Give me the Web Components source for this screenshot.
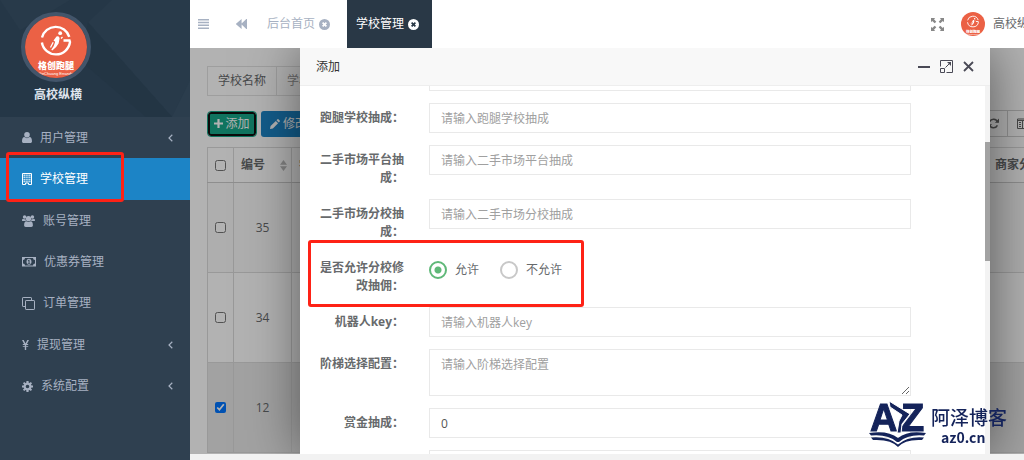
<!DOCTYPE html>
<html lang="zh-CN">
<head>
<meta charset="utf-8">
<meta name="viewport" content="width=device-width, initial-scale=1">
<title>学校管理</title>
<style>
  html, body { margin: 0; height: 100%; }
  body {
    font: 12px/18px "Open Sans", "Noto Sans CJK SC", sans-serif;
    color: #676a6c; background: #f2f2f2; overflow: hidden;
  }
</style>
</head>
<body>
<app-shell>
  <side-nav slot="nav" name="高校纵横">
    <nav-item icon="user" label="用户管理" more></nav-item>
    <nav-item icon="building" label="学校管理" active></nav-item>
    <nav-item icon="group" label="账号管理"></nav-item>
    <nav-item icon="money" label="优惠券管理"></nav-item>
    <nav-item icon="copy" label="订单管理"></nav-item>
    <nav-item icon="yen" label="提现管理" more></nav-item>
    <nav-item icon="gear" label="系统配置" more></nav-item>
  </side-nav>
  <top-bar slot="top" user="高校纵横">
    <tab-item label="后台首页"></tab-item>
    <tab-item label="学校管理" active></tab-item>
  </top-bar>
  <school-list slot="page"></school-list>
  <modal-dialog slot="dialog" heading="添加">
    <form-row></form-row>
    <form-row label="跑腿学校抽成：" hint="请输入跑腿学校抽成"></form-row>
    <form-row label="二手市场平台抽成：" hint="请输入二手市场平台抽成"></form-row>
    <form-row label="二手市场分校抽成：" hint="请输入二手市场分校抽成"></form-row>
    <radio-row label="是否允许分校修改抽佣：" options="允许,不允许"></radio-row>
    <form-row label="机器人key：" hint="请输入机器人key"></form-row>
    <form-row label="阶梯选择配置：" hint="请输入阶梯选择配置" multiline></form-row>
    <form-row label="赏金抽成：" value="0"></form-row>
    <form-row></form-row>
  </modal-dialog>
  <site-mark slot="mark"></site-mark>
</app-shell>

<script>
const define = (name, render, ready) => customElements.define(name, class extends HTMLElement {
  connectedCallback() {
    if (this.shadowRoot) return;
    this.attachShadow({ mode: 'open' }).innerHTML = render(this);
    if (ready) ready(this);
  }
});
const attr = (el, n) => el.getAttribute(n) || '';

/* name: [width, height, markup] */
const ICONS = {
  user: [10, 11, '<circle cx="5" cy="2.8" r="2.8"/><path d="M0 9.2C0 6.6 1 5.2 2.4 5.1 3.9 6.5 6.1 6.5 7.6 5.1 9 5.2 10 6.6 10 9.2 10 10.300 9.300 11 8.300 11H1.700C.700 11 0 10.300 0 9.200Z"/>'],
  building: [10, 12, '<path d="M.500.500H9.500V11.500H6.500V10H3.500V11.500H.500Z" fill="none" stroke="currentColor"/><path opacity=".75" d="M1.500 1.500h1.500v1.500H1.500zM3.500 1.500h1.300v1.500H3.500zM5.300 1.500h1.300v1.500H5.300zM7.100 1.500h1.400v1.500H7.100zM1.500 3.600h1.500v1.500H1.500zM3.500 3.600h1.300v1.500H3.500zM5.300 3.600h1.300v1.500H5.300zM7.100 3.600h1.400v1.500H7.100zM1.500 5.700h1.500v1.500H1.500zM3.500 5.700h1.300v1.500H3.500zM5.300 5.700h1.300v1.500H5.300zM7.100 5.700h1.400v1.500H7.100zM1.500 7.800h1.500v1.500H1.500zM3.500 7.800h1.300v1.500H3.500zM5.300 7.800h1.300v1.500H5.300zM7.100 7.800h1.400v1.500H7.100z"/>'],
  group: [13, 12, '<circle cx="2.600" cy="2" r="1.800"/><circle cx="10.400" cy="2" r="1.800"/><circle cx="6.500" cy="3.700" r="2.600"/><path d="M0 5.500C0 4.300.500 3.600 1.200 3.700 2 4.300 2.800 4.300 3.400 4.100 3.400 5 3.700 5.500 4 6H.900C.400 6 0 5.900 0 5.500ZM13 5.500C13 4.300 12.500 3.600 11.800 3.700 11 4.300 10.200 4.300 9.600 4.100 9.600 5 9.300 5.500 9 6H12.100C12.600 6 13 5.900 13 5.500ZM2.100 10.300C2.100 7.600 3 6.200 4.300 6.200 5.600 7.200 7.400 7.200 8.700 6.200 10 6.200 10.900 7.600 10.900 10.300 10.900 11.300 10.300 12 9.300 12H3.700C2.700 12 2.100 11.300 2.100 10.300Z"/>'],
  money: [14, 10, '<path fill-rule="evenodd" d="M0 0H14V9.500H0ZM1 3V6.500A2 2 0 0 1 3 8.500H11A2 2 0 0 1 13 6.500V3A2 2 0 0 1 11 1H3A2 2 0 0 1 1 3ZM7 1.800C8.500 1.800 9.500 3 9.500 4.750S8.500 7.700 7 7.700 4.500 6.500 4.500 4.750 5.500 1.800 7 1.800ZM5.700 6.700H8.300V6H7.500V2.800H6.800L5.700 3.700 6.200 4.200 6.600 3.900V6H5.700Z"/>'],
  copy: [13, 13, '<g fill="none" stroke="currentColor" stroke-linejoin="round"><rect x="3.500" y="3.500" width="9" height="9" rx=".6"/><path d="M9.500 3.500V1.100A.6.6 0 0 0 8.900.500H1.100A.6.6 0 0 0 .500 1.100V8.900A.6.6 0 0 0 1.100 9.500H3.500"/></g>'],
  yen: [7, 10, '<path d="M0 0H1.700L3.500 3.600 5.300 0H7L4.900 4H6.200V4.900H4.400L4.200 5.400V5.900H6.200V6.800H4.200V10H2.800V6.800H.800V5.900H2.800V5.400L2.600 4.900H.800V4H2.100Z"/>'],
  gear: [11, 11, '<circle cx="5.500" cy="5.500" r="2.900" fill="none" stroke="currentColor" stroke-width="2.200"/><path d="M4.400 0H6.600V2.200H4.400ZM4.400 8.800H6.600V11H4.400ZM0 4.400H2.200V6.600H0ZM8.800 4.400H11V6.600H8.800ZM.900 2.300 2.300.900 3.800 2.400 2.400 3.800ZM8.700.900 10.100 2.300 8.600 3.800 7.200 2.400ZM2.300 10.100.900 8.700 2.400 7.200 3.800 8.600ZM10.100 8.700 8.700 10.100 7.200 8.600 8.600 7.200Z"/>'],
  chevron: [5, 8, '<path d="M4.300 .8 1 4 4.300 7.200" fill="none" stroke="currentColor" stroke-width="1.200"/>'],
  bars: [11, 10, '<path d="M0 0h11v1.500H0zM0 2.800h11v1.500H0zM0 5.600h11v1.500H0zM0 8.400h11v1.500H0z"/>'],
  rewind: [11, 10, '<path d="M5.600 0V4.500L10.300 0H11V10H10.300L5.600 5.500V10L0 5.200V4.800Z"/>'],
  times: [11, 11, '<path fill-rule="evenodd" d="M5.500 0A5.500 5.500 0 1 1 5.500 11 5.500 5.500 0 1 1 5.500 0ZM4.200 3 3 4.200 4.300 5.500 3 6.800 4.200 8 5.500 6.700 6.800 8 8 6.800 6.700 5.500 8 4.200 6.800 3 5.500 4.300Z"/>'],
  arrows: [13, 13, '<path d="M0 0H4.200L3 1.200 5.300 3.700 3.700 5.300 1.200 3 0 4.200ZM13 0V4.200L11.800 3 9.300 5.300 7.700 3.700 10 1.200 8.800 0ZM0 13V8.800L1.200 10 3.700 7.700 5.300 9.300 3 11.800 4.200 13ZM13 13H8.800L10 11.800 7.700 9.300 9.300 7.700 11.800 10 13 8.800Z"/>'],
  plus: [9, 9, '<path d="M3.400 0h2.200v3.400H9v2.200H5.600V9H3.400V5.600H0V3.400h3.400z"/>'],
  pencil: [10, 10, '<path d="M0 10 .6 7.100 5.800 1.900 8.100 4.200 2.900 9.400ZM6.500 1.200 7.500.2Q8 0 8.400.3L9.700 1.600Q10 2 9.800 2.500L8.800 3.500Z"/>'],
  sort: [7, 11, '<path d="M3.500 0 7 4.800H0ZM0 6.200H7L3.500 11Z"/>'],
  refresh: [11, 11, '<path d="M9.700 4.200A4.400 4.400 0 0 0 1.600 3.700M1.300 6.800A4.400 4.400 0 0 0 9.400 7.300" fill="none" stroke="currentColor" stroke-width="1.500"/><path d="M11 .6V4.700H6.900ZM0 10.400V6.300H4.100Z"/>'],
  columns: [11, 11, '<path d="M.500 1H10.500V10.500H.500ZM.500 2.500H10.500M5.500 2V10M2 4.500H4M2 6.500H4M2 8.500H4M7 4.500H9M7 6.500H9M7 8.500H9" fill="none" stroke="currentColor"/>'],
  minimize: [12, 12, '<path d="M0 5h12v2H0z"/>'],
  expand: [13, 13, '<path d="M.500 6.500V.500H12.500V12.500H6.500M.500 8.500H4.500V12.500H.500ZM5.500 7.500 10 3" fill="none" stroke="currentColor"/><path d="M7 2H11V6Z"/>'],
  close: [11, 11, '<path d="M1 1 10 10M10 1 1 10" stroke="currentColor" stroke-width="1.800"/>']
};
define('ui-icon', el => {
  const [w, h, body] = ICONS[attr(el, 'name')];
  return `<style>:host{display:inline-flex;flex:none}svg{display:block;fill:currentColor}</style>
    <svg width="${w}" height="${h}" viewBox="0 0 ${w} ${h}" aria-hidden="true">${body}</svg>`;
});

define('brand-logo', () => `
  <style>:host{display:block;border-radius:50%;overflow:hidden}svg{display:block;width:100%;height:100%}
    text{fill:#fff;text-anchor:middle}
    .cn{font:900 9px "Noto Sans CJK SC",sans-serif}
    .en{font:4px "Liberation Sans",sans-serif}</style>
  <svg viewBox="0 0 62 62" role="img" aria-label="格创跑腿">
    <rect width="62" height="62" fill="#eb6145"/>
    <g fill="none" stroke="#fff" stroke-width="2.400">
      <path d="M44.300 20.800A14.200 14.200 0 0 0 17 21.500"/>
      <path d="M16.900 26.500A14.200 14.200 0 0 0 45 26L44.500 24.500H38.500"/>
    </g>
    <circle cx="35.200" cy="17.200" r="1.900" fill="#fff"/>
    <path d="M31.500 20.500Q34.500 19.800 34.600 22.500L33.600 27.500Q31.500 31.500 27.300 34.600L26.300 33.800Q29.500 29.500 30.200 25.800L28.500 24.400Z" fill="#fff"/>
    <path d="M28.200 26.300 25.500 31.500M36 22.500 37.500 21" stroke="#fff" stroke-width="1.300"/>
    <text class="cn" x="31" y="53">格创跑腿</text>
    <text class="en" x="31" y="59">GeChuang Errands</text>
  </svg>`);

define('app-shell', () => `
  <style>
    :host{display:flex;height:100vh}
    main{flex:1;min-width:0;display:flex;flex-direction:column;overflow:hidden}
    .stage{position:relative;flex:1;min-height:0;overflow:hidden;background:#fff;margin-bottom:6px}
    .shade{position:absolute;inset:0;background:rgba(0,0,0,.3)}
    slot[name=dialog]::slotted(*){position:absolute;top:0;bottom:0;left:110px;right:34px}
    slot[name=mark]::slotted(*){position:fixed;right:17px;bottom:12px}
  </style>
  <slot name="nav"></slot>
  <main>
    <slot name="top"></slot>
    <div class="stage"><slot name="page"></slot><div class="shade"></div><slot name="dialog"></slot></div>
  </main>
  <slot name="mark"></slot>`);

define('side-nav', el => `
  <style>
    :host{display:flex;flex-direction:column;width:190px;flex:none;background:#2f4050}
    header{position:relative;box-sizing:border-box;height:117px;padding:12px 21px 0;background:#253747;overflow:hidden}
    .bg{position:absolute;inset:0;width:100%;height:100%}
    brand-logo{position:relative;width:62px;height:62px;border:4px solid #43556a}
    strong{position:relative;display:block;margin:4px 0 0 13px;color:#dfe4ed}
    nav{display:grid;grid-template-rows:repeat(7,1fr);height:290px}
  </style>
  <header>
    <svg class="bg" viewBox="0 0 190 116" preserveAspectRatio="none" aria-hidden="true">
      <path d="M88 22 112 0H190V116H172Z" fill="#283a4a"/><path d="M88 22 172 116H146L80 60Z" fill="#233544"/>
      <path d="M0 0H70L20 30Z" fill="#283a4a"/><path d="M190 80 172 116H190Z" fill="#2b3d4d"/>
    </svg>
    <brand-logo></brand-logo><strong>${attr(el, 'name')}</strong>
  </header>
  <nav><slot></slot></nav>`);

define('nav-item', el => `
  <style>
    :host{display:block;position:relative}
    a{box-sizing:border-box;height:100%;display:flex;align-items:center;gap:8px;padding:0 17px 0 22px;color:#a7b1c2;text-decoration:none}
    .more{margin-left:auto}
    :host([active]) a{background:#1c84c6;color:#fff}
    .mark{position:absolute;z-index:1;inset:-6px 66px -2px 6px;border:3px solid #fe2216;border-radius:3px}
  </style>
  <a href="#"><ui-icon name="${attr(el, 'icon')}"></ui-icon><span>${attr(el, 'label')}</span>
    ${el.hasAttribute('more') ? '<ui-icon class="more" name="chevron"></ui-icon>' : ''}</a>
  ${el.hasAttribute('active') ? '<div class="mark"></div>' : ''}`);

define('top-bar', el => `
  <style>
    :host{box-sizing:border-box;display:flex;align-items:center;flex:none;height:48px;width:calc(100% + 24px);padding-right:7px;background:#fff}
    button{border:0;padding:0;background:none;color:#a7b1c2;display:flex}
    .menu{width:35px;padding-left:8px}
    .back{width:33px;padding-left:11px}
    .full{margin:0 17px 0 auto;color:#888}
    .tabs{display:flex;align-self:stretch;gap:4px}
    brand-logo{width:24px;height:24px;margin-right:8px}
  </style>
  <button class="menu" aria-label="菜单"><ui-icon name="bars"></ui-icon></button>
  <button class="back" aria-label="向左"><ui-icon name="rewind"></ui-icon></button>
  <div class="tabs"><slot></slot></div>
  <button class="full" aria-label="全屏"><ui-icon name="arrows"></ui-icon></button>
  <brand-logo></brand-logo><span>${attr(el, 'user')}</span>`);

define('tab-item', el => `
  <style>
    :host{display:flex}
    a{display:flex;align-items:center;gap:4px;padding:0 13px 0 9px;color:#a7b1c2;text-decoration:none}
    :host([active]) a{background:#293846;color:#fff}
  </style>
  <a href="#"><span>${attr(el, 'label')}</span><ui-icon name="times"></ui-icon></a>`);

define('school-list', () => `
  <style>
    :host{box-sizing:border-box;display:block;width:calc(100% + 24px);padding:18px 11px 0 17px}
    .search{display:flex;width:320px;height:30px;box-sizing:border-box;border:1px solid #e3e3e3;line-height:28px}
    .search label{padding:0 10px;border-right:1px solid #e3e3e3}
    .search input{flex:1;min-width:0;border:0;padding:0 10px;background:none;font:inherit;color:inherit}
    .search input::placeholder{color:#999}
    .tools{display:flex;align-items:center;gap:5px;margin-top:14px}
    .act{box-sizing:border-box;display:flex;align-items:center;gap:3px;height:26px;padding:0 9px;border:0;border-radius:3px;font:inherit;color:#fff;background:#1c84c6}
    .add{width:48px;justify-content:center;gap:2px;padding:0;border:2px solid #111;background:#18a689;outline:1px solid #18a689;margin-left:1px;height:24px;white-space:nowrap}
    .group{display:flex;margin-left:auto}
    .group button{display:flex;align-items:center;justify-content:center;width:30px;height:27px;padding:0;border:1px solid #d0d0d0;background:none;color:#666;margin-left:-1px}
    table{table-layout:fixed;width:100%;border-collapse:collapse;margin-top:10px}
    th,td{box-sizing:border-box;border:1px solid #dcdcdc;padding:0 7px;text-align:center;white-space:nowrap;overflow:hidden}
    th{height:35px;text-align:left;border-bottom-color:#ccc}
    td{height:90px}
    tbody tr:first-child{background:#f9f9f9}
    tbody tr:last-child{background:#e8e8e8}
    input[type=checkbox]{display:block;width:11px;height:11px;margin:0}
    th span{display:flex;align-items:center;justify-content:space-between}
    th span ui-icon{color:#bbb;margin-right:-3px}
  </style>
  <div class="search"><label for="q">学校名称</label><input id="q" placeholder="学校名称"></div>
  <div class="tools">
    <button class="act add"><ui-icon name="plus"></ui-icon>添加</button>
    <button class="act"><ui-icon name="pencil"></ui-icon>修改</button>
    <div class="group"><button aria-label="刷新"><ui-icon name="refresh"></ui-icon></button><button aria-label="列"><ui-icon name="columns"></ui-icon></button></div>
  </div>
  <table>
    <colgroup><col style="width:26px"><col style="width:58px"><col><col style="width:49px"></colgroup>
    <thead><tr><th><input type="checkbox" aria-label="全选"></th><th><span>编号<ui-icon name="sort"></ui-icon></span></th><th>学</th><th>商家分</th></tr></thead>
    <tbody>
      <tr><td><input type="checkbox" aria-label="35"></td><td>35</td><td></td><td></td></tr>
      <tr><td><input type="checkbox" aria-label="34"></td><td>34</td><td></td><td></td></tr>
      <tr><td><input type="checkbox" aria-label="12" checked></td><td>12</td><td></td><td></td></tr>
    </tbody>
  </table>`);

define('modal-dialog', el => `
  <style>
    :host{display:flex;flex-direction:column;background:#fff;box-shadow:1px 1px 50px rgba(0,0,0,.5)}
    header{display:flex;align-items:center;flex:none;height:37px;padding:0 16px;background:#f8f8f8;border-bottom:1px solid #eee;color:#333}
    h2{margin:0 auto 0 0;font:inherit}
    header button{display:flex;border:0;padding:0;margin-left:10px;background:none;color:#4a4a56}
    .body{flex:1;min-height:0;display:flex}
    .scroll{flex:1;min-width:0;overflow-y:auto;scrollbar-width:none}
    form{display:grid;gap:12px;padding:0 74px 20px 19px}
    .track{width:5px;background:#f3f3f3;display:grid;grid-template-rows:15fr 32fr 52fr}
    .track i{grid-row:2;background:#a2a2a2}
  </style>
  <header><h2>${attr(el, 'heading')}</h2>
    <button aria-label="最小化"><ui-icon name="minimize"></ui-icon></button>
    <button aria-label="最大化"><ui-icon name="expand"></ui-icon></button>
    <button aria-label="关闭"><ui-icon name="close"></ui-icon></button></header>
  <div class="body"><div class="scroll"><form><slot></slot></form></div><div class="track"><i></i></div></div>`,
  el => requestAnimationFrame(() => { el.shadowRoot.querySelector('.scroll').scrollTop = 25; }));

const rowStyle = `
  :host{display:grid;grid-template-columns:85px 1fr;column-gap:25px;align-items:start;position:relative}
  .label{padding-top:6px;text-align:right;font-weight:bold;overflow-wrap:anywhere}`;

define('form-row', el => {
  const multi = el.hasAttribute('multiline');
  return `<style>${rowStyle}
    input,textarea{grid-column:2;box-sizing:border-box;display:block;width:100%;margin:0;border:1px solid #e9e9e9;padding:0 11px;font:inherit;color:#555;background:#fff;outline:0}
    input{height:30px}
    textarea{height:47px;padding-top:6px;resize:vertical}
    ::placeholder{color:#a0a0a0}
  </style>
  ${attr(el, 'label') ? `<label class="label" for="f">${attr(el, 'label')}</label>` : ''}
  ${multi ? `<textarea id="f" placeholder="${attr(el, 'hint')}"></textarea>`
          : `<input id="f" ${attr(el, 'label') ? '' : 'aria-label="抽成"'} placeholder="${attr(el, 'hint')}" value="${attr(el, 'value')}">`}`;
});

define('radio-row', el => `
  <style>${rowStyle}
    .opts{display:flex;gap:21px;padding-top:8px}
    .opts label{display:flex;align-items:center;gap:8px}
    input{appearance:none;box-sizing:border-box;width:18px;height:18px;margin:0;border:2px solid #c8c8c8;border-radius:50%;background:#fff}
    input:checked{border-color:#5fb878;background:radial-gradient(circle,#5fb878 3px,#fff 4px)}
    .mark{position:absolute;inset:-13px 327px -12px -11px;border:3px solid #fe2216;border-radius:3px}
  </style>
  <div class="label" id="l">${attr(el, 'label')}</div>
  <div class="opts" role="radiogroup" aria-labelledby="l">
    ${attr(el, 'options').split(',').map((o, i) => `<label><input type="radio" name="allow" ${i ? '' : 'checked'}>${o}</label>`).join('')}
  </div><div class="mark"></div>`);

define('site-mark', () => `
  <style>
    :host{display:flex;align-items:center;gap:3px;color:#14235a;font-family:"Noto Sans CJK SC",sans-serif}
    svg{display:block;fill:currentColor;overflow:visible}
    svg text{font:bold 38px "Liberation Sans",sans-serif;stroke:currentColor;stroke-width:1}
    div{display:grid;padding-top:4px;font-size:19px;line-height:22px;font-weight:500}
    b{padding-left:10px;font-size:14px;line-height:18px}
  </style>
  <svg width="60" height="48" viewBox="0 0 60 48" role="img" aria-label="AZ">
    <text x="2" y="31">A</text><text x="33" y="31">Z</text>
    <path d="M21 1 42 14 34 24 33 33H29L31 21 34 15 22 7Z" stroke="#fff"/>
    <path d="M1 33Q20 30 30 38 40 30 58 33L56 35.500Q40 34 31 42H29Q20 34 3 35.500Z"/>
    <path d="M3 37.500Q20 36 30 44.500 40 36 56 37.500L54 40Q37 39 30 47 23 39 5 40Z"/>
  </svg>
  <div><span>阿泽博客</span><b>az0.cn</b></div>`);
</script>
</body>
</html>
